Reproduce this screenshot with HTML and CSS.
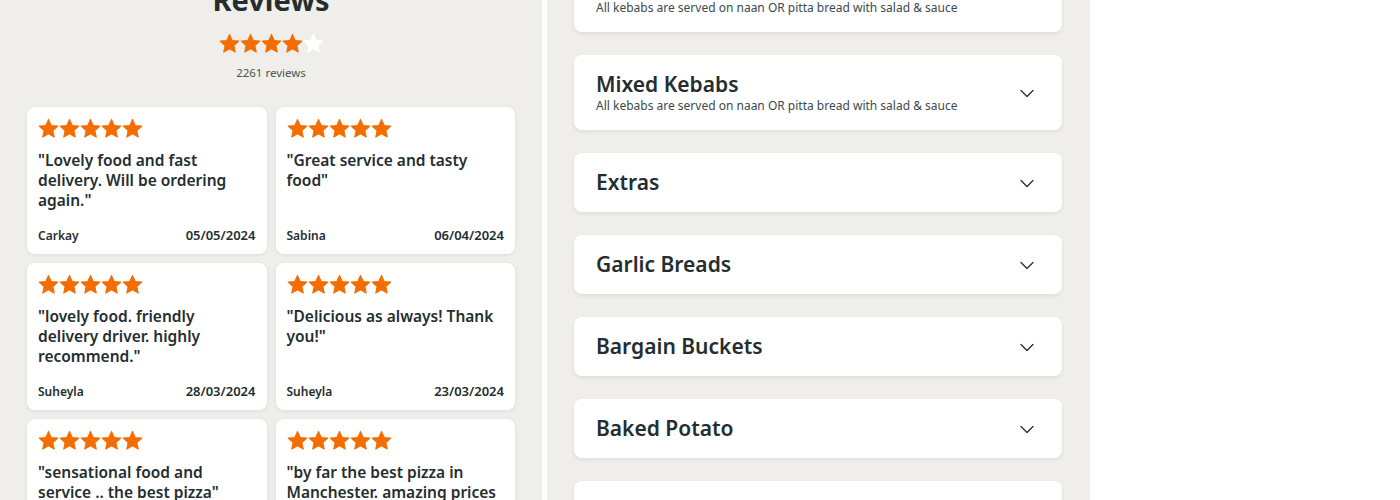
FILE: index.html
```html
<!DOCTYPE html>
<html lang="en">
<head>
<meta charset="utf-8">
<title>Reviews and menu</title>
<link rel="stylesheet" href="styles.css">
</head>
<body>
<svg width="0" height="0" class="defs" aria-hidden="true">
  <defs>
    <symbol id="star" viewBox="0 0 24 24">
      <path d="M12 1.6l3.1 6.9 7.5.8-5.6 5.1 1.6 7.4L12 18l-6.6 3.8 1.6-7.4-5.6-5.1 7.5-.8z" stroke-linejoin="round" stroke-width="1.2"/>
    </symbol>
    <symbol id="chev" viewBox="0 0 24 24">
      <path d="M6 9.5l6 6 6-6" fill="none" stroke-width="1.3" stroke-linecap="round" stroke-linejoin="round"/>
    </symbol>
  </defs>
</svg>
<div class="page">
  <section class="reviews">
    <h2 class="reviews-title">Reviews</h2>
    <div class="stars stars-summary">
      <svg class="star on"><use href="#star"/></svg><svg class="star on"><use href="#star"/></svg><svg class="star on"><use href="#star"/></svg><svg class="star on"><use href="#star"/></svg><svg class="star off"><use href="#star"/></svg>
    </div>
    <p class="count">2261 reviews</p>
    <div class="review-grid">
      <article class="review">
        <div class="stars"><svg class="star on"><use href="#star"/></svg><svg class="star on"><use href="#star"/></svg><svg class="star on"><use href="#star"/></svg><svg class="star on"><use href="#star"/></svg><svg class="star on"><use href="#star"/></svg></div>
        <p class="quote">"Lovely food and fast delivery. Will be ordering again."</p>
        <div class="meta"><span class="author">Carkay</span><span class="date">05/05/2024</span></div>
      </article>
      <article class="review">
        <div class="stars"><svg class="star on"><use href="#star"/></svg><svg class="star on"><use href="#star"/></svg><svg class="star on"><use href="#star"/></svg><svg class="star on"><use href="#star"/></svg><svg class="star on"><use href="#star"/></svg></div>
        <p class="quote">"Great service and tasty food"</p>
        <div class="meta"><span class="author">Sabina</span><span class="date">06/04/2024</span></div>
      </article>
      <article class="review">
        <div class="stars"><svg class="star on"><use href="#star"/></svg><svg class="star on"><use href="#star"/></svg><svg class="star on"><use href="#star"/></svg><svg class="star on"><use href="#star"/></svg><svg class="star on"><use href="#star"/></svg></div>
        <p class="quote">"lovely food. friendly delivery driver. highly recommend."</p>
        <div class="meta"><span class="author">Suheyla</span><span class="date">28/03/2024</span></div>
      </article>
      <article class="review">
        <div class="stars"><svg class="star on"><use href="#star"/></svg><svg class="star on"><use href="#star"/></svg><svg class="star on"><use href="#star"/></svg><svg class="star on"><use href="#star"/></svg><svg class="star on"><use href="#star"/></svg></div>
        <p class="quote">"Delicious as always! Thank you!"</p>
        <div class="meta"><span class="author">Suheyla</span><span class="date">23/03/2024</span></div>
      </article>
      <article class="review">
        <div class="stars"><svg class="star on"><use href="#star"/></svg><svg class="star on"><use href="#star"/></svg><svg class="star on"><use href="#star"/></svg><svg class="star on"><use href="#star"/></svg><svg class="star on"><use href="#star"/></svg></div>
        <p class="quote">"sensational food and service .. the best pizza"</p>
        <div class="meta"><span class="author">Ahmed</span><span class="date">20/03/2024</span></div>
      </article>
      <article class="review">
        <div class="stars"><svg class="star on"><use href="#star"/></svg><svg class="star on"><use href="#star"/></svg><svg class="star on"><use href="#star"/></svg><svg class="star on"><use href="#star"/></svg><svg class="star on"><use href="#star"/></svg></div>
        <p class="quote">"by far the best pizza in Manchester. amazing prices and quick delivery"</p>
        <div class="meta"><span class="author">Sam</span><span class="date">18/03/2024</span></div>
      </article>
    </div>
  </section>
  <section class="menu">
    <div class="category first">
      <div class="cat-text">
        <h3 class="cat-title">Kebabs</h3>
        <p class="cat-sub">All kebabs are served on naan OR pitta bread with salad &amp; sauce</p>
      </div>
      <svg class="chev"><use href="#chev"/></svg>
    </div>
    <div class="category">
      <div class="cat-text">
        <h3 class="cat-title">Mixed Kebabs</h3>
        <p class="cat-sub">All kebabs are served on naan OR pitta bread with salad &amp; sauce</p>
      </div>
      <svg class="chev"><use href="#chev"/></svg>
    </div>
    <div class="category">
      <div class="cat-text"><h3 class="cat-title">Extras</h3></div>
      <svg class="chev"><use href="#chev"/></svg>
    </div>
    <div class="category">
      <div class="cat-text"><h3 class="cat-title">Garlic Breads</h3></div>
      <svg class="chev"><use href="#chev"/></svg>
    </div>
    <div class="category">
      <div class="cat-text"><h3 class="cat-title">Bargain Buckets</h3></div>
      <svg class="chev"><use href="#chev"/></svg>
    </div>
    <div class="category">
      <div class="cat-text"><h3 class="cat-title">Baked Potato</h3></div>
      <svg class="chev"><use href="#chev"/></svg>
    </div>
    <div class="category">
      <div class="cat-text"><h3 class="cat-title">Desserts</h3></div>
      <svg class="chev"><use href="#chev"/></svg>
    </div>
  </section>
</div>
</body>
</html>
```

FILE: styles.css
```css
* { box-sizing: border-box; }

html, body {
  margin: 0;
  padding: 0;
  background: #ffffff;
  height: 500px;
  overflow: hidden;
}

body {
  font-family: "Noto Sans", "Open Sans", sans-serif;
  color: #242e30;
}

.defs { position: absolute; width: 0; height: 0; overflow: hidden; }

.page {
  display: flex;
  align-items: flex-start;
  gap: 5px;
  height: 500px;
}

.reviews {
  width: 542px;
  height: 500px;
  flex: none;
  background: #efeeea;
  padding: 0 27px;
  display: flex;
  flex-direction: column;
  align-items: center;
  overflow: hidden;
}

.reviews-title {
  margin: -20px 0 0;
  font-size: 29px;
  line-height: 39px;
  font-weight: 700;
  color: #242e30;
}

.stars {
  display: flex;
  gap: 0;
}

.stars-summary {
  margin-top: 14px;
}

.star {
  width: 21px;
  height: 21px;
  display: block;
}

.star.on { fill: #f36d00; stroke: #f36d00; }
.star.off { fill: #ffffff; stroke: #ffffff; }

.count {
  margin: 11px 0 0;
  font-size: 11.5px;
  line-height: 16px;
  color: #4a5557;
}

.review-grid {
  margin-top: 26px;
  width: 100%;
  display: grid;
  grid-template-columns: 1fr 1fr;
  gap: 9px;
}

.review {
  background: #ffffff;
  border-radius: 8px;
  box-shadow: 0 1px 4px rgba(0, 0, 0, 0.08);
  padding: 11px 11px 10px;
  display: flex;
  flex-direction: column;
  min-height: 146px;
}

.quote {
  margin: 11px 0 0;
  font-size: 15.5px;
  line-height: 20px;
  font-weight: 600;
  color: #242e30;
}

.meta {
  margin-top: auto;
  padding-top: 17px;
  display: flex;
  justify-content: space-between;
  align-items: baseline;
  line-height: 16px;
  font-weight: 600;
  color: #242e30;
}

.author { font-size: 12px; }
.date { font-size: 13px; }

.menu {
  width: 543px;
  height: 500px;
  flex: none;
  background: #efeeea;
  padding: 0 28px 0 27px;
  display: flex;
  flex-direction: column;
  gap: 23px;
  overflow: hidden;
}

.category {
  background: #ffffff;
  border-radius: 8px;
  box-shadow: 0 2px 4px rgba(0, 0, 0, 0.07);
  padding: 16px 23px 16px 22px;
  display: flex;
  align-items: center;
  flex: none;
}

.category.first { margin-top: -43px; }

.cat-text { flex: 1; }

.cat-title {
  margin: 0;
  font-size: 21px;
  line-height: 27px;
  font-weight: 600;
  color: #242e30;
}

.cat-sub {
  margin: 0;
  font-size: 12px;
  line-height: 16px;
  color: #3c4a4d;
}

.chev {
  width: 24px;
  height: 24px;
  flex: none;
  stroke: #242e30;
}
```
